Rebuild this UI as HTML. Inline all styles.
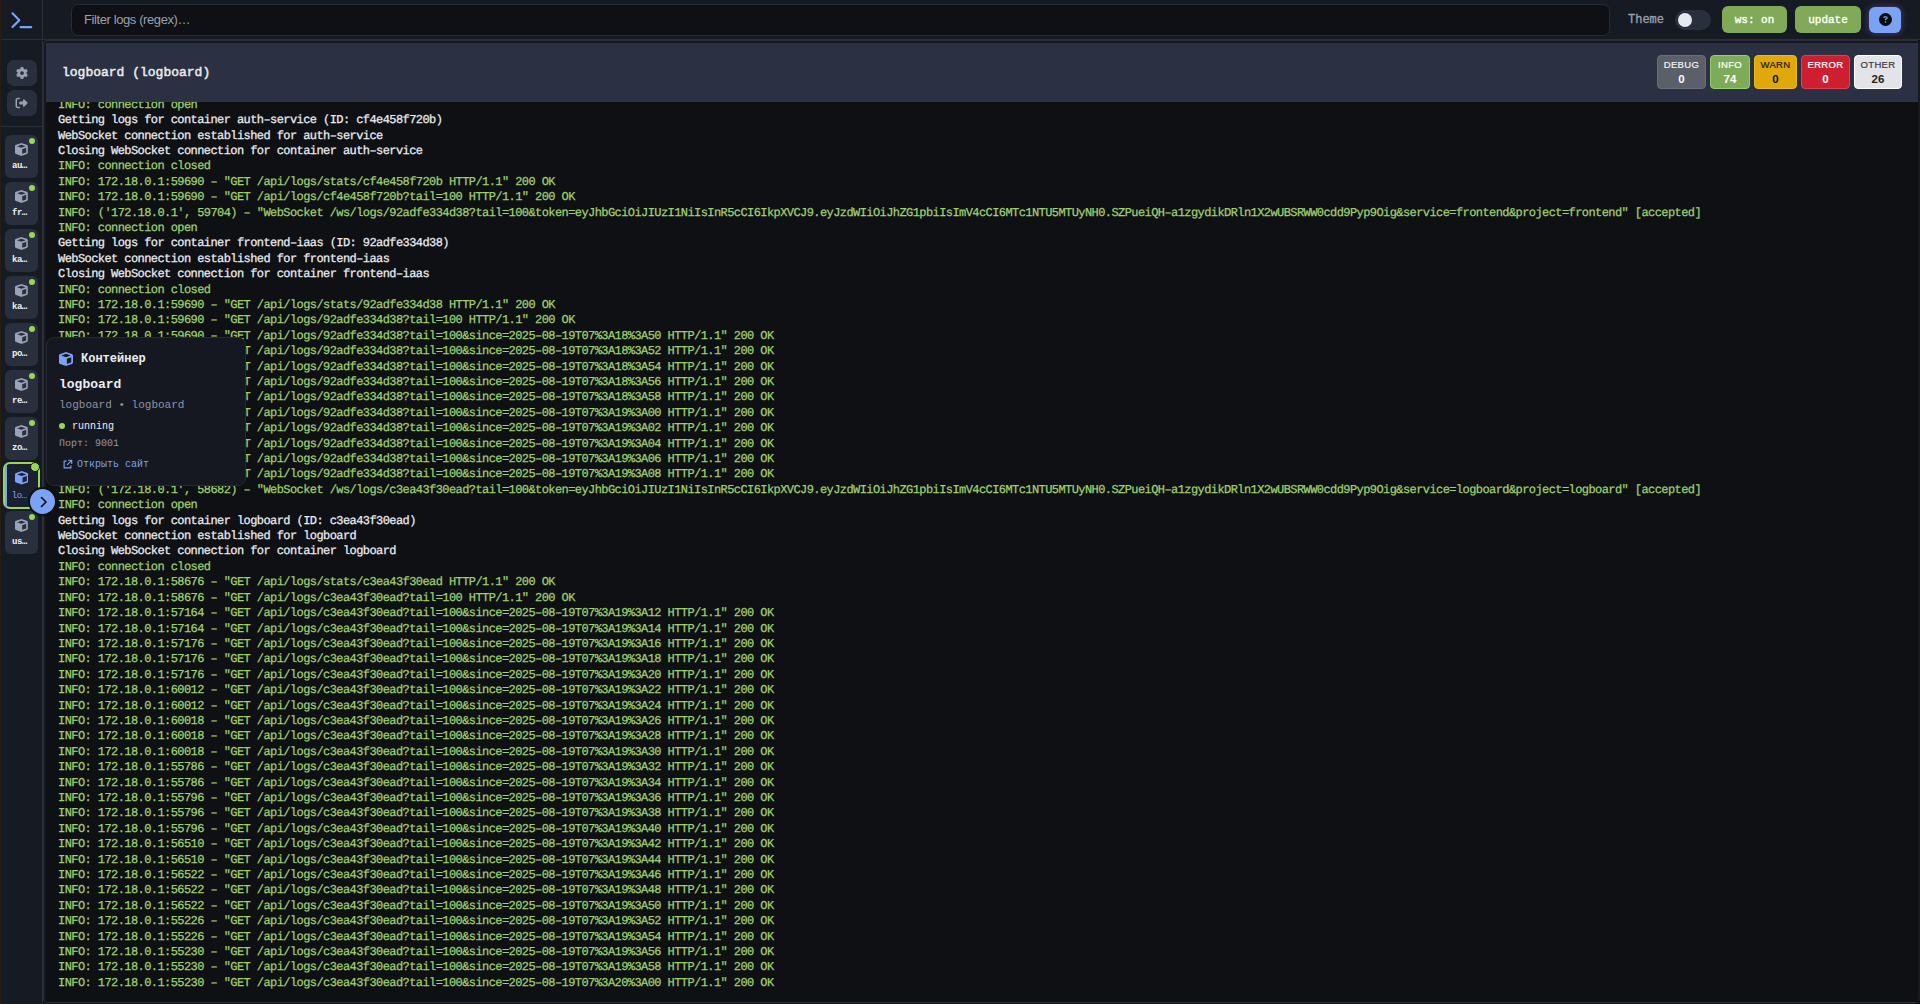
<!DOCTYPE html>
<html><head><meta charset="utf-8">
<style>
*{box-sizing:border-box;margin:0;padding:0}
html,body{width:1920px;height:1004px;overflow:hidden;background:#161a23;font-family:"Liberation Mono",monospace}
.abs{position:absolute}
#edge{left:0;top:0;width:1px;height:1004px;background:#2a1c12}
#topbar{left:0;top:0;width:1920px;height:40px;background:#161a23;border-bottom:1px solid #2a2f3b}
#side{left:0;top:0;width:43px;height:1004px;border-right:1px solid #2a2f3b}
#sidediv{left:1px;top:126px;width:41px;height:1px;background:#2a2f3b}
#filter{left:71px;top:4px;width:1539px;height:32px;background:#0e1015;border:1px solid #262b37;border-radius:7px;
  font-family:"Liberation Sans",sans-serif;font-size:13px;letter-spacing:-0.4px;color:#9aa0ae;padding-left:12px;line-height:30px}
#theme{left:1628px;top:12px;font-size:12px;color:#9aa2b4;line-height:16px;-webkit-text-stroke:0.3px #9aa2b4}
#toggle{left:1675px;top:10px;width:36px;height:20px;border-radius:10px;background:#2a2f3e}
#knob{left:1678px;top:13px;width:14px;height:14px;border-radius:7px;background:#e6e9f0}
.btn{top:6px;height:27px;border-radius:6px;background:#80aa58;color:#fff;font-size:11px;text-align:center;line-height:28px;-webkit-text-stroke:0.35px #fff}
#help{left:1869px;top:7px;width:32px;height:26px;border-radius:6px;background:#7ba2f4;box-shadow:0 0 6px 1px rgba(140,110,230,.35)}
#mainbg{left:43px;top:40px;width:1877px;height:964px;background:#15171e}
.corner{width:5px;height:5px;background:#0b0c0f}
#panel{left:43px;top:40px;width:1877px;height:963px;border:1px solid #2a2e39;border-right-color:#191c25;border-bottom-color:#262a33;border-radius:4px;background:#15181f;overflow:hidden}
#phead{left:2px;top:2px;width:1872px;height:59px;background:#2b3042;border-bottom:1px solid #2f3444}
#ptitle{left:16px;top:21px;font-size:13px;color:#e8eaf0;line-height:18px;-webkit-text-stroke:0.5px #e8eaf0}
.badge{top:12px;height:34px;border-radius:4px;font-family:"Liberation Sans",sans-serif;text-align:center;border:1px solid transparent}
.badge .l{font-size:9.5px;line-height:12px;margin-top:3px;letter-spacing:0.35px;-webkit-text-stroke:0.2px currentColor}
.badge .n{font-size:11.5px;font-weight:bold;line-height:14px;margin-top:0.5px}
#logs{left:2px;top:61px;width:1872px;height:900px;overflow:hidden;background:#0e1014}
#loginner{position:absolute;left:12px;top:-4.3px;text-rendering:geometricPrecision;font-size:12px;line-height:15.4px;white-space:pre;letter-spacing:-0.576px;-webkit-text-stroke:0.25px currentColor}
.i{color:#a0d26c}
.w{color:#eceef2}
.item{left:5px;width:33px;height:43px;border-radius:6px;background:#2a2f3e}
.item .lab{position:absolute;left:7px;top:25px;font-size:9px;font-weight:bold;letter-spacing:-0.5px;color:#eef0f4;line-height:12px}
.item .dot{position:absolute;left:23.8px;top:2.7px;width:6.5px;height:6.5px;border-radius:50%;background:#98d65a}
.item svg{position:absolute;left:10.2px;top:8.2px}
#tip{left:46px;top:337px;width:200px;height:149px;background:#151820;border:1px solid #262a35;border-radius:8px}
</style></head><body>
<div id="topbar" class="abs"></div>
<div id="side" class="abs"></div>
<div id="edge" class="abs"></div>
<div id="sidediv" class="abs"></div>
<svg class="abs" style="left:10px;top:10px" width="24" height="20" viewBox="0 0 24 20"><path d="M2.5 3.3 L9.3 10.2 L2.5 17" fill="none" stroke="#7ba2f4" stroke-width="2.2" stroke-linecap="round" stroke-linejoin="round"/><path d="M10.6 17.2 H21.2" fill="none" stroke="#7ba2f4" stroke-width="2.2" stroke-linecap="round"/></svg>
<div id="filter" class="abs">Filter logs (regex)…</div>
<div id="theme" class="abs">Theme</div>
<div id="toggle" class="abs"></div>
<div id="knob" class="abs"></div>
<div class="abs btn" style="left:1722px;width:65px">ws: on</div>
<div class="abs btn" style="left:1795px;width:66px">update</div>
<div id="help" class="abs"><svg class="abs" style="left:9.5px;top:6.3px" width="13" height="13" viewBox="0 0 512 512"><path fill="#0b0c10" d="M256 512A256 256 0 1 0 256 0a256 256 0 1 0 0 512zM169.8 165.3c7.9-22.3 29.1-37.3 52.8-37.3l58.3 0c34.9 0 63.1 28.3 63.1 63.1c0 22.6-12.1 43.5-31.7 54.8L280 264.4c-.2 13-10.9 23.6-24 23.6c-13.3 0-24-10.7-24-24l0-13.5c0-8.6 4.6-16.5 12.1-20.8l44.3-25.4c4.7-2.7 7.6-7.7 7.6-13.1c0-8.4-6.8-15.1-15.1-15.1l-58.3 0c-3.4 0-6.4 2.1-7.5 5.3l-.4 1.2c-4.4 12.5-18.2 19-30.6 14.6s-19-18.2-14.6-30.6l.4-1.2zM224 352a32 32 0 1 1 64 0 32 32 0 1 1 -64 0z"/></svg></div>

<!-- sidebar buttons -->
<div class="abs" style="left:7px;top:60px;width:30px;height:26px;border-radius:7px;background:#2a2f3e"></div>
<svg class="abs" style="left:15.5px;top:66.6px" width="12" height="12" viewBox="0 0 512 512"><path fill="#9aa0b2" d="M495.9 166.6c3.2 8.7 .5 18.4-6.4 24.6l-43.3 39.4c1.1 8.3 1.7 16.8 1.7 25.4s-.6 17.1-1.7 25.4l43.3 39.4c6.9 6.2 9.6 15.9 6.4 24.6c-4.4 11.9-9.7 23.3-15.8 34.3l-4.7 8.1c-6.6 11-14 21.4-22.1 31.2c-5.9 7.2-15.7 9.6-24.5 6.8l-55.7-17.7c-13.4 10.3-28.2 18.900-44 25.4l-12.5 57.1c-2 9.1-9 16.3-18.2 17.8c-13.8 2.3-28 3.5-42.5 3.5s-28.7-1.2-42.5-3.5c-9.2-1.5-16.2-8.7-18.2-17.8l-12.5-57.1c-15.8-6.5-30.6-15.1-44-25.4L83.1 425.9c-8.8 2.8-18.6 .3-24.5-6.8c-8.1-9.8-15.5-20.2-22.1-31.2l-4.7-8.1c-6.1-11-11.4-22.4-15.8-34.3c-3.2-8.7-.5-18.4 6.4-24.6l43.3-39.4C64.6 273.1 64 264.6 64 256s.6-17.1 1.7-25.4L22.4 191.2c-6.9-6.2-9.6-15.9-6.4-24.6c4.4-11.900 9.7-23.3 15.8-34.3l4.7-8.1c6.6-11 14-21.4 22.1-31.2c5.9-7.2 15.7-9.6 24.5-6.8l55.7 17.7c13.4-10.3 28.2-18.9 44-25.4l12.5-57.1c2-9.1 9-16.3 18.2-17.8C227.3 1.2 241.5 0 256 0s28.7 1.2 42.5 3.5c9.2 1.5 16.2 8.7 18.2 17.8l12.5 57.1c15.8 6.5 30.6 15.1 44 25.4l55.7-17.7c8.8-2.8 18.6-.3 24.5 6.8c8.1 9.8 15.5 20.2 22.1 31.2l4.7 8.1c6.1 11 11.4 22.4 15.8 34.3zM256 336a80 80 0 1 0 0-160 80 80 0 1 0 0 160z"/></svg>
<div class="abs" style="left:7px;top:90px;width:30px;height:26px;border-radius:7px;background:#2a2f3e"></div>
<svg class="abs" style="left:15px;top:97px" width="13" height="12" viewBox="0 0 512 512"><path fill="#9aa0b2" d="M377.9 105.9L500.7 228.7c7.2 7.2 11.3 17.1 11.3 27.3s-4.1 20.1-11.3 27.3L377.9 406.1c-6.4 6.4-15 9.9-24 9.9c-18.7 0-33.9-15.2-33.9-33.9l0-62.1-128 0c-17.7 0-32-14.3-32-32l0-64c0-17.7 14.3-32 32-32l128 0 0-62.1c0-18.7 15.2-33.9 33.900-33.9c9 0 17.6 3.6 24 9.9zM160 96L96 96c-17.7 0-32 14.3-32 32l0 256c0 17.7 14.3 32 32 32l64 0c17.7 0 32 14.3 32 32s-14.3 32-32 32l-64 0c-53 0-96-43-96-96L0 128C0 75 43 32 96 32l64 0c17.7 0 32 14.3 32 32s-14.3 32-32 32z"/></svg>

<div class="abs item" style="top:135px"><svg width="12.8" height="12.8" viewBox="0 0 512 512"><path fill="#9aa3b8" d="M234.5 5.7c13.9-5 29.1-5 43.1 0l192 68.6C495 83.4 512 107.5 512 134.6V377.4c0 27-17 51.2-42.5 60.3l-192 68.6c-13.9 5-29.1 5-43.1 0l-192-68.6C17 428.6 0 404.5 0 377.4V134.6c0-27 17-51.2 42.5-60.3l192-68.6zM256 66L82.3 128 256 190l173.7-62L256 66zm32 368.6l160-57.1v-188L288 246.6v188z"/></svg><div class="lab">au…</div><div class="dot"></div></div>
<div class="abs item" style="top:182px"><svg width="12.8" height="12.8" viewBox="0 0 512 512"><path fill="#9aa3b8" d="M234.5 5.7c13.9-5 29.1-5 43.1 0l192 68.6C495 83.4 512 107.5 512 134.6V377.4c0 27-17 51.2-42.5 60.3l-192 68.6c-13.9 5-29.1 5-43.1 0l-192-68.6C17 428.6 0 404.5 0 377.4V134.6c0-27 17-51.2 42.5-60.3l192-68.6zM256 66L82.3 128 256 190l173.7-62L256 66zm32 368.6l160-57.1v-188L288 246.6v188z"/></svg><div class="lab">fr…</div><div class="dot"></div></div>
<div class="abs item" style="top:229px"><svg width="12.8" height="12.8" viewBox="0 0 512 512"><path fill="#9aa3b8" d="M234.5 5.7c13.9-5 29.1-5 43.1 0l192 68.6C495 83.4 512 107.5 512 134.6V377.4c0 27-17 51.2-42.5 60.3l-192 68.6c-13.9 5-29.1 5-43.1 0l-192-68.6C17 428.6 0 404.5 0 377.4V134.6c0-27 17-51.2 42.5-60.3l192-68.6zM256 66L82.3 128 256 190l173.7-62L256 66zm32 368.6l160-57.1v-188L288 246.6v188z"/></svg><div class="lab">ka…</div><div class="dot"></div></div>
<div class="abs item" style="top:276px"><svg width="12.8" height="12.8" viewBox="0 0 512 512"><path fill="#9aa3b8" d="M234.5 5.7c13.9-5 29.1-5 43.1 0l192 68.6C495 83.4 512 107.5 512 134.6V377.4c0 27-17 51.2-42.5 60.3l-192 68.6c-13.9 5-29.1 5-43.1 0l-192-68.6C17 428.6 0 404.5 0 377.4V134.6c0-27 17-51.2 42.5-60.3l192-68.6zM256 66L82.3 128 256 190l173.7-62L256 66zm32 368.6l160-57.1v-188L288 246.6v188z"/></svg><div class="lab">ka…</div><div class="dot"></div></div>
<div class="abs item" style="top:323px"><svg width="12.8" height="12.8" viewBox="0 0 512 512"><path fill="#9aa3b8" d="M234.5 5.7c13.9-5 29.1-5 43.1 0l192 68.6C495 83.4 512 107.5 512 134.6V377.4c0 27-17 51.2-42.5 60.3l-192 68.6c-13.9 5-29.1 5-43.1 0l-192-68.6C17 428.6 0 404.5 0 377.4V134.6c0-27 17-51.2 42.5-60.3l192-68.6zM256 66L82.3 128 256 190l173.7-62L256 66zm32 368.6l160-57.1v-188L288 246.6v188z"/></svg><div class="lab">po…</div><div class="dot"></div></div>
<div class="abs item" style="top:370px"><svg width="12.8" height="12.8" viewBox="0 0 512 512"><path fill="#9aa3b8" d="M234.5 5.7c13.9-5 29.1-5 43.1 0l192 68.6C495 83.4 512 107.5 512 134.6V377.4c0 27-17 51.2-42.5 60.3l-192 68.6c-13.9 5-29.1 5-43.1 0l-192-68.6C17 428.6 0 404.5 0 377.4V134.6c0-27 17-51.2 42.5-60.3l192-68.6zM256 66L82.3 128 256 190l173.7-62L256 66zm32 368.6l160-57.1v-188L288 246.6v188z"/></svg><div class="lab">re…</div><div class="dot"></div></div>
<div class="abs item" style="top:417px"><svg width="12.8" height="12.8" viewBox="0 0 512 512"><path fill="#9aa3b8" d="M234.5 5.7c13.9-5 29.1-5 43.1 0l192 68.6C495 83.4 512 107.5 512 134.6V377.4c0 27-17 51.2-42.5 60.3l-192 68.6c-13.9 5-29.1 5-43.1 0l-192-68.6C17 428.6 0 404.5 0 377.4V134.6c0-27 17-51.2 42.5-60.3l192-68.6zM256 66L82.3 128 256 190l173.7-62L256 66zm32 368.6l160-57.1v-188L288 246.6v188z"/></svg><div class="lab">zo…</div><div class="dot"></div></div>
<div class="abs item" style="top:462px;left:3px;width:37px;height:47px;background:#1b2030;border:2px solid #98d65a;border-radius:7px"><div style="position:absolute;left:0;top:1px;width:2px;height:42px;background:#7ba2f4"></div><svg style="left:9.7px;top:7.3px" width="13.5" height="13.5" viewBox="0 0 512 512"><path fill="#7ba2f4" d="M234.5 5.7c13.9-5 29.1-5 43.1 0l192 68.6C495 83.4 512 107.5 512 134.6V377.4c0 27-17 51.2-42.5 60.3l-192 68.6c-13.9 5-29.1 5-43.1 0l-192-68.6C17 428.6 0 404.5 0 377.4V134.6c0-27 17-51.2 42.5-60.3l192-68.6zM256 66L82.3 128 256 190l173.7-62L256 66zm32 368.6l160-57.1v-188L288 246.6v188z"/></svg><div class="lab" style="left:6.8px;top:26px;color:#7ba2f4;font-weight:normal">lo…</div><div class="dot" style="left:24.5px;top:-2px;width:10px;height:10px;border:1px solid #0e1014"></div></div>
<div class="abs item" style="top:511px"><svg width="12.8" height="12.8" viewBox="0 0 512 512"><path fill="#9aa3b8" d="M234.5 5.7c13.9-5 29.1-5 43.1 0l192 68.6C495 83.4 512 107.5 512 134.6V377.4c0 27-17 51.2-42.5 60.3l-192 68.6c-13.9 5-29.1 5-43.1 0l-192-68.6C17 428.6 0 404.5 0 377.4V134.6c0-27 17-51.2 42.5-60.3l192-68.6zM256 66L82.3 128 256 190l173.7-62L256 66zm32 368.6l160-57.1v-188L288 246.6v188z"/></svg><div class="lab">us…</div><div class="dot"></div></div>

<div id="mainbg" class="abs"></div><div class="abs corner" style="left:43px;top:40px;width:4px;height:4px"></div><div class="abs corner" style="left:1915px;top:40px"></div><div class="abs corner" style="left:43px;top:999px;width:4px;height:4px"></div><div class="abs corner" style="left:1915px;top:999px"></div>
<div id="panel" class="abs">
  <div id="phead" class="abs">
    <div id="ptitle" class="abs">logboard (logboard)</div>
    <div class="abs badge" style="left:1611px;width:49px;background:#5a5f69;border-color:#6a6f79"><div class="l" style="color:#f4f4f4">DEBUG</div><div class="n" style="color:#ffffff">0</div></div>
<div class="abs badge" style="left:1664px;width:40px;background:#7dab59;border-color:#94d06a"><div class="l" style="color:#ffffff">INFO</div><div class="n" style="color:#ffffff">74</div></div>
<div class="abs badge" style="left:1708px;width:43px;background:#e0a90b;border-color:#f0b820"><div class="l" style="color:#1c1800">WARN</div><div class="n" style="color:#111111">0</div></div>
<div class="abs badge" style="left:1755px;width:49px;background:#ce1f31;border-color:#e04050"><div class="l" style="color:#ffffff">ERROR</div><div class="n" style="color:#ffffff">0</div></div>
<div class="abs badge" style="left:1808px;width:48px;background:#e2e4e9;border-color:#ffffff"><div class="l" style="color:#3a3a3a">OTHER</div><div class="n" style="color:#222">26</div></div>
  </div>
  <div id="logs" class="abs"><div id="loginner"><div class="i">INFO: connection open</div><div class="w">Getting logs for container auth–service (ID: cf4e458f720b)</div><div class="w">WebSocket connection established for auth–service</div><div class="w">Closing WebSocket connection for container auth–service</div><div class="i">INFO: connection closed</div><div class="i">INFO: 172.18.0.1:59690 – "GET /api/logs/stats/cf4e458f720b HTTP/1.1" 200 OK</div><div class="i">INFO: 172.18.0.1:59690 – "GET /api/logs/cf4e458f720b?tail=100 HTTP/1.1" 200 OK</div><div class="i">INFO: ('172.18.0.1', 59704) – "WebSocket /ws/logs/92adfe334d38?tail=100&amp;token=eyJhbGciOiJIUzI1NiIsInR5cCI6IkpXVCJ9.eyJzdWIiOiJhZG1pbiIsImV4cCI6MTc1NTU5MTUyNH0.SZPueiQH–a1zgydikDRln1X2wUBSRWW0cdd9Pyp9Oig&amp;service=frontend&amp;project=frontend" [accepted]</div><div class="i">INFO: connection open</div><div class="w">Getting logs for container frontend–iaas (ID: 92adfe334d38)</div><div class="w">WebSocket connection established for frontend–iaas</div><div class="w">Closing WebSocket connection for container frontend–iaas</div><div class="i">INFO: connection closed</div><div class="i">INFO: 172.18.0.1:59690 – "GET /api/logs/stats/92adfe334d38 HTTP/1.1" 200 OK</div><div class="i">INFO: 172.18.0.1:59690 – "GET /api/logs/92adfe334d38?tail=100 HTTP/1.1" 200 OK</div><div class="i">INFO: 172.18.0.1:59690 – "GET /api/logs/92adfe334d38?tail=100&amp;since=2025–08–19T07%3A18%3A50 HTTP/1.1" 200 OK</div><div class="i">INFO: 172.18.0.1:59690 – "GET /api/logs/92adfe334d38?tail=100&amp;since=2025–08–19T07%3A18%3A52 HTTP/1.1" 200 OK</div><div class="i">INFO: 172.18.0.1:59690 – "GET /api/logs/92adfe334d38?tail=100&amp;since=2025–08–19T07%3A18%3A54 HTTP/1.1" 200 OK</div><div class="i">INFO: 172.18.0.1:59690 – "GET /api/logs/92adfe334d38?tail=100&amp;since=2025–08–19T07%3A18%3A56 HTTP/1.1" 200 OK</div><div class="i">INFO: 172.18.0.1:59690 – "GET /api/logs/92adfe334d38?tail=100&amp;since=2025–08–19T07%3A18%3A58 HTTP/1.1" 200 OK</div><div class="i">INFO: 172.18.0.1:59690 – "GET /api/logs/92adfe334d38?tail=100&amp;since=2025–08–19T07%3A19%3A00 HTTP/1.1" 200 OK</div><div class="i">INFO: 172.18.0.1:59690 – "GET /api/logs/92adfe334d38?tail=100&amp;since=2025–08–19T07%3A19%3A02 HTTP/1.1" 200 OK</div><div class="i">INFO: 172.18.0.1:59690 – "GET /api/logs/92adfe334d38?tail=100&amp;since=2025–08–19T07%3A19%3A04 HTTP/1.1" 200 OK</div><div class="i">INFO: 172.18.0.1:59690 – "GET /api/logs/92adfe334d38?tail=100&amp;since=2025–08–19T07%3A19%3A06 HTTP/1.1" 200 OK</div><div class="i">INFO: 172.18.0.1:59690 – "GET /api/logs/92adfe334d38?tail=100&amp;since=2025–08–19T07%3A19%3A08 HTTP/1.1" 200 OK</div><div class="i">INFO: ('172.18.0.1', 58682) – "WebSocket /ws/logs/c3ea43f30ead?tail=100&amp;token=eyJhbGciOiJIUzI1NiIsInR5cCI6IkpXVCJ9.eyJzdWIiOiJhZG1pbiIsImV4cCI6MTc1NTU5MTUyNH0.SZPueiQH–a1zgydikDRln1X2wUBSRWW0cdd9Pyp9Oig&amp;service=logboard&amp;project=logboard" [accepted]</div><div class="i">INFO: connection open</div><div class="w">Getting logs for container logboard (ID: c3ea43f30ead)</div><div class="w">WebSocket connection established for logboard</div><div class="w">Closing WebSocket connection for container logboard</div><div class="i">INFO: connection closed</div><div class="i">INFO: 172.18.0.1:58676 – "GET /api/logs/stats/c3ea43f30ead HTTP/1.1" 200 OK</div><div class="i">INFO: 172.18.0.1:58676 – "GET /api/logs/c3ea43f30ead?tail=100 HTTP/1.1" 200 OK</div><div class="i">INFO: 172.18.0.1:57164 – "GET /api/logs/c3ea43f30ead?tail=100&amp;since=2025–08–19T07%3A19%3A12 HTTP/1.1" 200 OK</div><div class="i">INFO: 172.18.0.1:57164 – "GET /api/logs/c3ea43f30ead?tail=100&amp;since=2025–08–19T07%3A19%3A14 HTTP/1.1" 200 OK</div><div class="i">INFO: 172.18.0.1:57176 – "GET /api/logs/c3ea43f30ead?tail=100&amp;since=2025–08–19T07%3A19%3A16 HTTP/1.1" 200 OK</div><div class="i">INFO: 172.18.0.1:57176 – "GET /api/logs/c3ea43f30ead?tail=100&amp;since=2025–08–19T07%3A19%3A18 HTTP/1.1" 200 OK</div><div class="i">INFO: 172.18.0.1:57176 – "GET /api/logs/c3ea43f30ead?tail=100&amp;since=2025–08–19T07%3A19%3A20 HTTP/1.1" 200 OK</div><div class="i">INFO: 172.18.0.1:60012 – "GET /api/logs/c3ea43f30ead?tail=100&amp;since=2025–08–19T07%3A19%3A22 HTTP/1.1" 200 OK</div><div class="i">INFO: 172.18.0.1:60012 – "GET /api/logs/c3ea43f30ead?tail=100&amp;since=2025–08–19T07%3A19%3A24 HTTP/1.1" 200 OK</div><div class="i">INFO: 172.18.0.1:60018 – "GET /api/logs/c3ea43f30ead?tail=100&amp;since=2025–08–19T07%3A19%3A26 HTTP/1.1" 200 OK</div><div class="i">INFO: 172.18.0.1:60018 – "GET /api/logs/c3ea43f30ead?tail=100&amp;since=2025–08–19T07%3A19%3A28 HTTP/1.1" 200 OK</div><div class="i">INFO: 172.18.0.1:60018 – "GET /api/logs/c3ea43f30ead?tail=100&amp;since=2025–08–19T07%3A19%3A30 HTTP/1.1" 200 OK</div><div class="i">INFO: 172.18.0.1:55786 – "GET /api/logs/c3ea43f30ead?tail=100&amp;since=2025–08–19T07%3A19%3A32 HTTP/1.1" 200 OK</div><div class="i">INFO: 172.18.0.1:55786 – "GET /api/logs/c3ea43f30ead?tail=100&amp;since=2025–08–19T07%3A19%3A34 HTTP/1.1" 200 OK</div><div class="i">INFO: 172.18.0.1:55796 – "GET /api/logs/c3ea43f30ead?tail=100&amp;since=2025–08–19T07%3A19%3A36 HTTP/1.1" 200 OK</div><div class="i">INFO: 172.18.0.1:55796 – "GET /api/logs/c3ea43f30ead?tail=100&amp;since=2025–08–19T07%3A19%3A38 HTTP/1.1" 200 OK</div><div class="i">INFO: 172.18.0.1:55796 – "GET /api/logs/c3ea43f30ead?tail=100&amp;since=2025–08–19T07%3A19%3A40 HTTP/1.1" 200 OK</div><div class="i">INFO: 172.18.0.1:56510 – "GET /api/logs/c3ea43f30ead?tail=100&amp;since=2025–08–19T07%3A19%3A42 HTTP/1.1" 200 OK</div><div class="i">INFO: 172.18.0.1:56510 – "GET /api/logs/c3ea43f30ead?tail=100&amp;since=2025–08–19T07%3A19%3A44 HTTP/1.1" 200 OK</div><div class="i">INFO: 172.18.0.1:56522 – "GET /api/logs/c3ea43f30ead?tail=100&amp;since=2025–08–19T07%3A19%3A46 HTTP/1.1" 200 OK</div><div class="i">INFO: 172.18.0.1:56522 – "GET /api/logs/c3ea43f30ead?tail=100&amp;since=2025–08–19T07%3A19%3A48 HTTP/1.1" 200 OK</div><div class="i">INFO: 172.18.0.1:56522 – "GET /api/logs/c3ea43f30ead?tail=100&amp;since=2025–08–19T07%3A19%3A50 HTTP/1.1" 200 OK</div><div class="i">INFO: 172.18.0.1:55226 – "GET /api/logs/c3ea43f30ead?tail=100&amp;since=2025–08–19T07%3A19%3A52 HTTP/1.1" 200 OK</div><div class="i">INFO: 172.18.0.1:55226 – "GET /api/logs/c3ea43f30ead?tail=100&amp;since=2025–08–19T07%3A19%3A54 HTTP/1.1" 200 OK</div><div class="i">INFO: 172.18.0.1:55230 – "GET /api/logs/c3ea43f30ead?tail=100&amp;since=2025–08–19T07%3A19%3A56 HTTP/1.1" 200 OK</div><div class="i">INFO: 172.18.0.1:55230 – "GET /api/logs/c3ea43f30ead?tail=100&amp;since=2025–08–19T07%3A19%3A58 HTTP/1.1" 200 OK</div><div class="i">INFO: 172.18.0.1:55230 – "GET /api/logs/c3ea43f30ead?tail=100&amp;since=2025–08–19T07%3A20%3A00 HTTP/1.1" 200 OK</div></div></div>
</div>

<div class="abs" style="left:28px;top:487px;width:29px;height:29px;border-radius:50%;background:#7ba2f4;border:2px solid #0e1014"></div><svg class="abs" style="left:39px;top:495.5px" width="10" height="12" viewBox="0 0 10 12"><path d="M2.5 1.5 L7 6 L2.5 10.5" fill="none" stroke="#0b0c10" stroke-width="1.6" stroke-linecap="round" stroke-linejoin="round"/></svg>
<div id="tip" class="abs">
<svg class="abs" style="left:12px;top:14.4px" width="14" height="14" viewBox="0 0 512 512"><path fill="#7ba2f4" d="M234.5 5.7c13.9-5 29.1-5 43.1 0l192 68.6C495 83.4 512 107.5 512 134.6V377.4c0 27-17 51.2-42.5 60.3l-192 68.6c-13.9 5-29.1 5-43.1 0l-192-68.6C17 428.6 0 404.5 0 377.4V134.6c0-27 17-51.2 42.5-60.3l192-68.6zM256 66L82.3 128 256 190l173.7-62L256 66zm32 368.6l160-57.1v-188L288 246.6v188z"/></svg>
<div class="abs" style="left:34px;top:13px;font-size:12px;font-weight:bold;color:#eceef2;line-height:16px">Контейнер</div>
<div class="abs" style="left:12px;top:38px;font-size:13px;font-weight:bold;color:#eceef2;line-height:17px">logboard</div>
<div class="abs" style="left:12px;top:60px;font-size:11px;color:#8d93a3;line-height:15px">logboard • logboard</div>
<div class="abs" style="left:12px;top:85px;width:6px;height:6px;border-radius:50%;background:#98d65a"></div>
<div class="abs" style="left:25px;top:81.5px;font-size:10px;color:#eceef2;line-height:14px">running</div>
<div class="abs" style="left:12px;top:99.5px;font-size:10px;color:#9197a6;line-height:14px;text-rendering:geometricPrecision">Порт: 9001</div>
<svg class="abs" style="left:15px;top:121px" width="11" height="11" viewBox="0 0 12 12"><path d="M5 2.3 H2.3 V9.7 H9.7 V7" fill="none" stroke="#7ba2f4" stroke-width="1.25" stroke-linejoin="round"/><path d="M5.8 6.2 L10.3 1.7 M7.2 1.4 H10.6 V4.8" fill="none" stroke="#7ba2f4" stroke-width="1.25" stroke-linecap="round" stroke-linejoin="round"/></svg>
<div class="abs" style="left:30px;top:119.5px;font-size:10px;color:#7ba2f4;line-height:14px">Открыть сайт</div>
</div>
</body></html>
